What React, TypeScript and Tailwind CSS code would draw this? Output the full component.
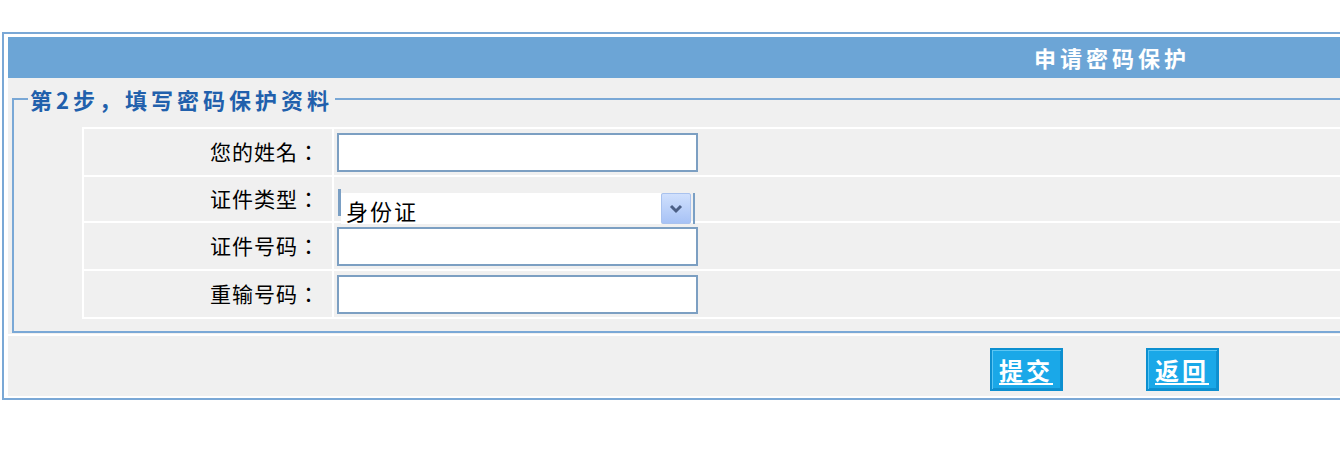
import React from 'react';

const rows = [
  { label: '您的姓名：', kind: 'input', h: 'h-[46px]' },
  { label: '证件类型：', kind: 'select', h: 'h-[44px]' },
  { label: '证件号码：', kind: 'input', h: 'h-[46px]' },
  { label: '重输号码：', kind: 'input', h: 'h-[46px]' },
];

const SelectBox: React.FC = () => (
  <div className="relative z-10 flex items-start pt-[12px] pl-[4px]">
    <div className="w-[3px] h-[27px] bg-[#7a9fc4]"></div>
    <div className="mt-[4px] w-[320px] h-[31px] bg-white pl-[5px] flex items-end text-[22px] leading-[28px] tracking-[2px] text-black">
      身份证
    </div>
    <div className="mt-[4px] w-[30px] h-[31px] flex items-center justify-center rounded-[2px] border border-[#a9c2ee] bg-gradient-to-b from-[#d0e0fd] to-[#a7c2f5]">
      <svg width="14" height="10" viewBox="0 0 14 10">
        <polyline points="2,2 7,7 12,2" fill="none" stroke="#4b5f86" strokeWidth="3" />
      </svg>
    </div>
    <div className="mt-[4px] ml-[2px] w-[2px] h-[31px] bg-[#7a9fc4]"></div>
  </div>
);

const Btn: React.FC<{ text: string }> = ({ text }) => (
  <button className="w-[73px] h-[43px] bg-[#1aa8e8] border-2 border-[#0c8fd0] shadow-[inset_1px_1px_0_#5cc6f3,inset_-1px_-1px_0_#1190cf] flex items-center justify-center text-white font-bold text-[24px] leading-none tracking-[3px] underline underline-offset-[3px]">
    {text}
  </button>
);

export default function App() {
  return (
    <div className="w-[1340px] h-[452px] overflow-hidden bg-white font-['Noto_Sans_CJK_SC','Noto_Sans',sans-serif]">
      <div className="ml-[2px] mt-[32px] w-[2220px] border-2 border-[#7aa8d6] bg-white pt-[3px] px-[4px] pb-[2px]">
        <div className="h-[41px] bg-[#6ca5d6] flex items-center justify-center text-white font-bold text-[22px] tracking-[4px]">
          申请密码保护
        </div>

        <div className="bg-[#f0f0f0] pt-[7px] pb-[1px] px-[4px]">
          <fieldset className="border-2 border-[#7aa8d6] pl-[14px] pr-[54px] pb-[12px]">
            <legend className="px-[2px] text-[22px] leading-[28px] font-bold tracking-[4px] text-[#2160ac]">
              第2步，填写密码保护资料
            </legend>
            <div className="ml-[54px] mt-[14px] grid grid-cols-[248px_1fr] gap-[2px] p-[2px] bg-white">
              {rows.map((r) => (
                <React.Fragment key={r.label}>
                  <div className={`${r.h} bg-[#f0f0f0] flex items-center justify-end pr-[12px] font-['Noto_Sans_CJK_TC','Noto_Sans_CJK_SC',sans-serif] text-[21px] tracking-[1px] text-black`}>
                    {r.label}
                  </div>
                  <div className={`${r.h} bg-[#f0f0f0]`}>
                    {r.kind === 'input' ? (
                      <div className="h-full flex items-center pl-[3px]">
                        <input className="w-[361px] h-[39px] border-2 border-[#7c9fc2] bg-white outline-none" />
                      </div>
                    ) : (
                      <SelectBox />
                    )}
                  </div>
                </React.Fragment>
              ))}
            </div>
          </fieldset>
        </div>

        <div className="mt-[2px] h-[60px] bg-[#f0f0f0] flex items-start justify-center gap-[83px] pt-[12px] pr-[16px]">
          <Btn text="提交" />
          <Btn text="返回" />
        </div>
      </div>
    </div>
  );
}
